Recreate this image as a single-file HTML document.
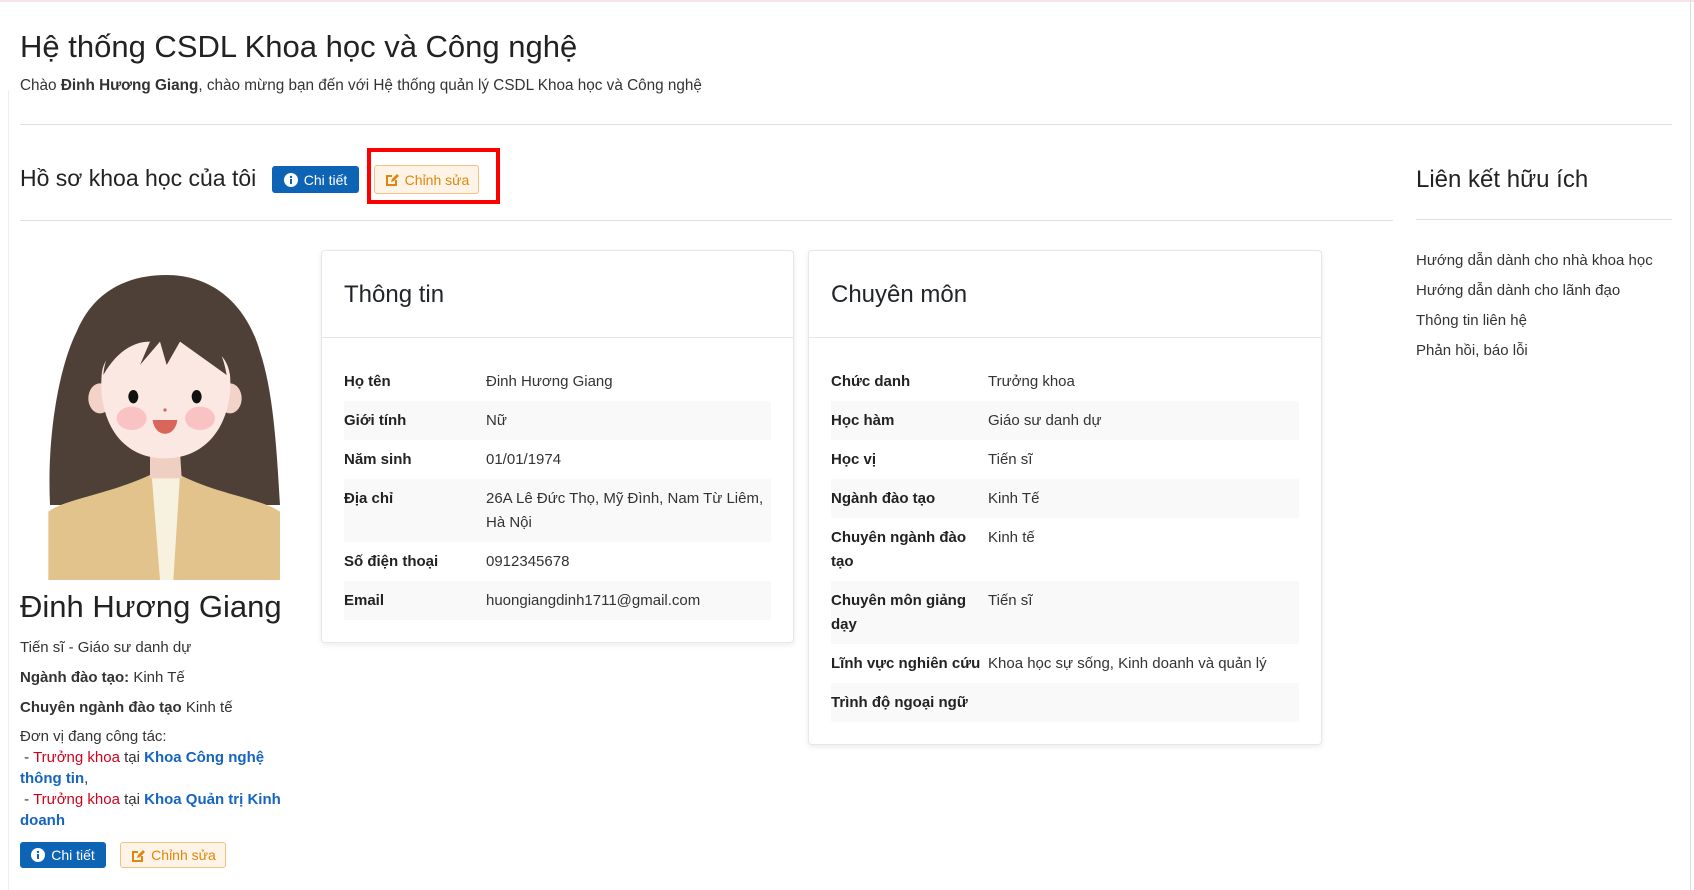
<!DOCTYPE html>
<html><head><meta charset="utf-8">
<style>
*{box-sizing:border-box;margin:0;padding:0}
body{width:1694px;height:890px;overflow:hidden;background:#fff;font-family:"Liberation Sans",Arial,sans-serif;color:#212529;position:relative;font-size:15px}
.a{position:absolute;white-space:nowrap}
.hr{position:absolute;height:1px;background:#dee2e6}
.btn{position:absolute;border-radius:3px;font-size:14px;display:flex;align-items:center;justify-content:center;gap:6px}
.bp{background:#0d64b5;color:#fff}
.bw{background:#fdf3e6;color:#e0860c;border:1px solid #f1c27d}
.card{position:absolute;background:#fff;border:1px solid #e5e7ea;border-radius:4px;box-shadow:0 2px 6px rgba(0,0,0,.08)}
.card h3{font-weight:400;font-size:24px;position:absolute;left:22px;top:30px}
.card .hd{position:absolute;left:0;right:0;top:86px;height:1px;background:#e3e5e8}
table{position:absolute;border-collapse:collapse;font-size:15px;line-height:24px}
td{padding:7.5px 0;vertical-align:top}
td.l{font-weight:bold;color:#222}
td.v{color:#333}
tr:nth-child(even){background:#f9f9f9}
.red{color:#d0021b}.blue{color:#1565c0;font-weight:bold}
</style></head><body>
<div style="position:absolute;left:0;top:0;width:1694px;height:2px;background:#f6e4ea"></div>
<div style="position:absolute;left:1690px;top:0;width:1px;height:890px;background:#ddd"></div>
<div style="position:absolute;left:8px;top:90px;width:1px;height:800px;background:#eee"></div>

<div class="a" style="left:20px;top:29px;font-size:31px;color:#222">Hệ thống CSDL Khoa học và Công nghệ</div>
<div class="a" style="left:20px;top:77px;font-size:15.3px;color:#333">Chào <b>Đinh Hương Giang</b>, chào mừng bạn đến với Hệ thống quản lý CSDL Khoa học và Công nghệ</div>
<div class="hr" style="left:20px;top:124px;width:1652px"></div>

<div class="a" style="left:20px;top:165px;font-size:23px;color:#222">Hồ sơ khoa học của tôi</div>
<div class="btn bp" style="left:272px;top:166px;width:87px;height:27px"><svg width="14" height="14" viewBox="0 0 14 14"><circle cx="7" cy="7" r="7" fill="#fff"/><rect x="6" y="6" width="2" height="5" fill="#0d64b5"/><circle cx="7" cy="4" r="1.2" fill="#0d64b5"/></svg>Chi tiết</div>
<div style="position:absolute;left:367px;top:148px;width:133px;height:56px;border:4px solid #f00"></div>
<div class="btn bw" style="left:374px;top:165px;width:105px;height:29px"><svg width="15" height="15" viewBox="0 0 15 15"><path d="M2 3h6v2H4v7h7V8h2v6H2z" fill="#e0860c"/><path d="M7 10l1-3 5-5 2 2-5 5z" fill="#e0860c"/></svg>Chỉnh sửa</div>
<div class="hr" style="left:20px;top:220px;width:1373px"></div>

<div class="a" style="left:1416px;top:166px;font-size:24px;color:#222">Liên kết hữu ích</div>
<div class="hr" style="left:1416px;top:219px;width:256px"></div>
<div class="a" style="left:1416px;top:246px;color:#333;line-height:30px">Hướng dẫn dành cho nhà khoa học<br>Hướng dẫn dành cho lãnh đạo<br>Thông tin liên hệ<br>Phản hồi, báo lỗi</div>

<svg style="position:absolute;left:40px;top:265px" width="250" height="315" viewBox="0 0 750 945">
<path d="M30 720 C20 500 60 300 110 200 C160 80 260 30 380 30 C520 30 620 120 660 260 C700 380 710 550 720 720 Z" fill="#4e4036"/>
<path d="M25 945 L25 740 C80 700 200 690 330 630 L420 630 C540 690 660 700 720 740 L720 945 Z" fill="#e2c38c"/>
<path d="M335 630 L420 630 L400 945 L360 945 Z" fill="#f7f1df"/>
<path d="M330 560 L420 560 L425 640 L330 640 Z" fill="#f0cfc3"/>
<ellipse cx="180" cy="400" rx="35" ry="45" fill="#f3d3c8"/>
<ellipse cx="570" cy="400" rx="35" ry="45" fill="#f3d3c8"/>
<path d="M185 330 C190 250 280 220 375 220 C480 220 560 250 570 330 C580 450 520 580 375 580 C230 580 175 450 185 330 Z" fill="#fce8e2"/>
<path d="M190 330 C230 260 280 230 330 230 L300 300 L360 230 L380 300 L420 230 L560 330 C540 200 460 170 375 170 C280 170 200 220 190 330 Z" fill="#4e4036"/>
<ellipse cx="280" cy="395" rx="15" ry="20" fill="#111"/>
<ellipse cx="470" cy="395" rx="15" ry="20" fill="#111"/>
<ellipse cx="275" cy="460" rx="45" ry="35" fill="#f7b8bb" opacity=".8"/>
<ellipse cx="480" cy="460" rx="45" ry="35" fill="#f7b8bb" opacity=".8"/>
<circle cx="375" cy="435" r="5" fill="#d06a60"/>
<path d="M338 465 C345 520 405 520 412 465 Z" fill="#d9665a"/>
</svg>

<div class="a" style="left:20px;top:589px;font-size:31px;color:#222">Đinh Hương Giang</div>
<div class="a" style="left:20px;top:633px;color:#333;line-height:30px">Tiến sĩ - Giáo sư danh dự<br><b>Ngành đào tạo:</b> Kinh Tế<br><b>Chuyên ngành đào tạo</b> Kinh tế</div>
<div class="a" style="left:20px;top:726px;color:#333;line-height:21px">Đơn vị đang công tác:<br>&nbsp;- <span class="red">Trưởng khoa</span> tại <span class="blue">Khoa Công nghệ</span><br><span class="blue">thông tin</span>,<br>&nbsp;- <span class="red">Trưởng khoa</span> tại <span class="blue">Khoa Quản trị Kinh</span><br><span class="blue">doanh</span></div>
<div class="btn bp" style="left:20px;top:842px;width:86px;height:26px"><svg width="14" height="14" viewBox="0 0 14 14"><circle cx="7" cy="7" r="7" fill="#fff"/><rect x="6" y="6" width="2" height="5" fill="#0d64b5"/><circle cx="7" cy="4" r="1.2" fill="#0d64b5"/></svg>Chi tiết</div>
<div class="btn bw" style="left:120px;top:842px;width:106px;height:26px"><svg width="15" height="15" viewBox="0 0 15 15"><path d="M2 3h6v2H4v7h7V8h2v6H2z" fill="#e0860c"/><path d="M7 10l1-3 5-5 2 2-5 5z" fill="#e0860c"/></svg>Chỉnh sửa</div>

<div class="card" style="left:321px;top:250px;width:473px;height:393px">
<h3>Thông tin</h3><div class="hd"></div>
<table style="left:22px;top:111px;width:427px">
<tr><td class="l" style="width:142px">Họ tên</td><td class="v">Đinh Hương Giang</td></tr>
<tr><td class="l">Giới tính</td><td class="v">Nữ</td></tr>
<tr><td class="l">Năm sinh</td><td class="v">01/01/1974</td></tr>
<tr><td class="l">Địa chỉ</td><td class="v">26A Lê Đức Thọ, Mỹ Đình, Nam Từ Liêm,<br>Hà Nội</td></tr>
<tr><td class="l">Số điện thoại</td><td class="v">0912345678</td></tr>
<tr><td class="l">Email</td><td class="v">huongiangdinh1711@gmail.com</td></tr>
</table></div>

<div class="card" style="left:808px;top:250px;width:514px;height:495px">
<h3>Chuyên môn</h3><div class="hd"></div>
<table style="left:22px;top:111px;width:468px">
<tr><td class="l" style="width:157px">Chức danh</td><td class="v">Trưởng khoa</td></tr>
<tr><td class="l">Học hàm</td><td class="v">Giáo sư danh dự</td></tr>
<tr><td class="l">Học vị</td><td class="v">Tiến sĩ</td></tr>
<tr><td class="l">Ngành đào tạo</td><td class="v">Kinh Tế</td></tr>
<tr><td class="l">Chuyên ngành đào<br>tạo</td><td class="v">Kinh tế</td></tr>
<tr><td class="l">Chuyên môn giảng<br>dạy</td><td class="v">Tiến sĩ</td></tr>
<tr><td class="l">Lĩnh vực nghiên cứu</td><td class="v">Khoa học sự sống, Kinh doanh và quản lý</td></tr>
<tr><td class="l">Trình độ ngoại ngữ</td><td class="v"></td></tr>
</table></div>
</body></html>
